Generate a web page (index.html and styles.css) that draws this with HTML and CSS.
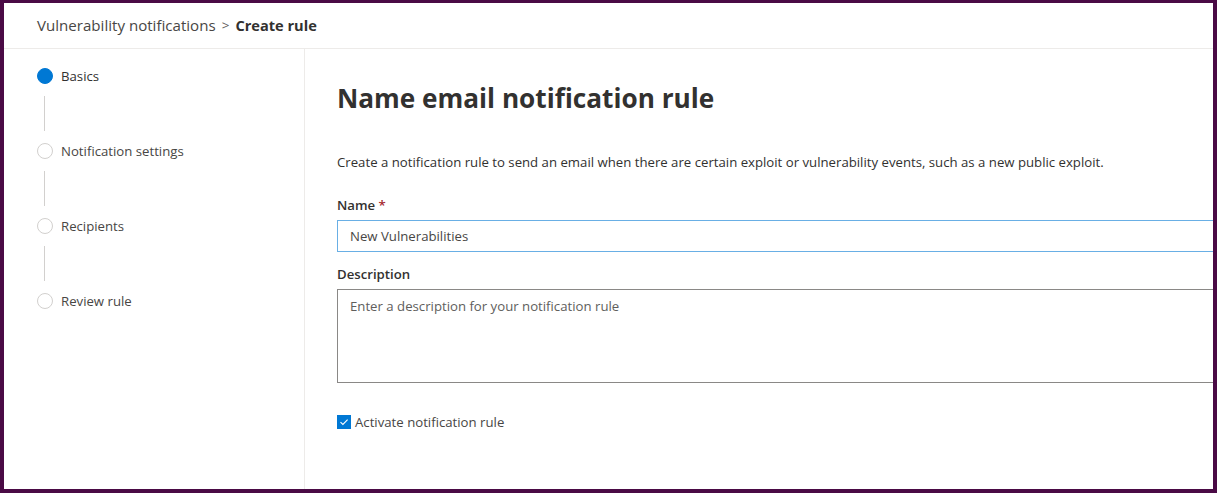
FILE: index.html
```html
<!DOCTYPE html>
<html lang="en">
<head>
<meta charset="utf-8">
<title>Create rule</title>
<link rel="stylesheet" href="styles.css">
</head>
<body>
<div class="frame">
  <header class="header">
    <span class="crumb">Vulnerability notifications</span>
    <span class="sep">&gt;</span>
    <span class="crumb-current">Create rule</span>
  </header>
  <div class="body">
    <nav class="steps">
      <div class="step active"><span class="dot"></span><span class="step-label">Basics</span></div>
      <div class="connector"><span class="line"></span></div>
      <div class="step"><span class="dot"></span><span class="step-label">Notification settings</span></div>
      <div class="connector"><span class="line"></span></div>
      <div class="step"><span class="dot"></span><span class="step-label">Recipients</span></div>
      <div class="connector"><span class="line"></span></div>
      <div class="step"><span class="dot"></span><span class="step-label">Review rule</span></div>
    </nav>
    <main class="main">
      <h1 class="title">Name email notification rule</h1>
      <p class="intro">Create a notification rule to send an email when there are certain exploit or vulnerability events, such as a new public exploit.</p>
      <label class="field-label">Name <span class="req">*</span></label>
      <div class="input focused">New Vulnerabilities</div>
      <label class="field-label">Description</label>
      <div class="textarea placeholder">Enter a description for your notification rule</div>
      <div class="check-row">
        <span class="checkbox">
          <svg width="10" height="10" viewBox="0 0 10 10"><path d="M1.5 5.2 L3.9 7.5 L8.6 2.6" fill="none" stroke="#fff" stroke-width="1.1"/></svg>
        </span>
        <span class="check-label">Activate notification rule</span>
      </div>
    </main>
  </div>
</div>
</body>
</html>
```
FILE: styles.css
```css
* { box-sizing: border-box; }
html, body { margin: 0; padding: 0; }
body {
  font-family: "Open Sans", "Noto Sans", "Liberation Sans", sans-serif;
  color: #323130;
  background: #4a0a45;
}
.frame {
  width: 1217px;
  height: 493px;
  border-style: solid;
  border-color: #4a0a45;
  border-width: 3px 4px 4px 4px;
  background: #fff;
  overflow: hidden;
  display: flex;
  flex-direction: column;
}
.header {
  height: 46px;
  flex: none;
  border-bottom: 1px solid #edebe9;
  padding: 0 0 2px 33px;
  display: flex;
  align-items: center;
  gap: 6px;
  font-size: 15.1px;
  color: #484644;
}
.sep { font-size: 13.5px; color: #605e5c; }
.crumb-current { font-weight: 700; font-size: 14.6px; color: #323130; }
.body {
  flex: 1;
  display: flex;
  min-height: 0;
}
.steps {
  width: 301px;
  flex: none;
  border-right: 1px solid #edebe9;
  padding: 17px 0 0 33px;
  display: flex;
  flex-direction: column;
}
.step {
  display: flex;
  align-items: center;
  gap: 8px;
  height: 20px;
  font-size: 13.2px;
  color: #484644;
}
.dot {
  width: 16px;
  height: 16px;
  border-radius: 50%;
  border: 1px solid #d2d0ce;
  background: #fff;
  flex: none;
}
.step.active .dot { background: #0078d4; border-color: #0078d4; }
.step.active .step-label { color: #323130; }
.connector {
  height: 55px;
  padding: 10px 0;
  display: flex;
}
.line {
  width: 1px;
  margin-left: 7px;
  background: #d2d0ce;
}
.main {
  flex: 1;
  padding: 31px 0 0 32px;
  min-width: 0;
}
.title {
  margin: 0;
  font-size: 26.2px;
  font-weight: 700;
  line-height: 36px;
  color: #323130;
  white-space: nowrap;
}
.intro {
  margin: 37px 0 0;
  font-size: 13.2px;
  line-height: 18px;
  color: #323130;
  white-space: nowrap;
}
.field-label {
  display: block;
  margin-top: 24px;
  font-size: 13.2px;
  font-weight: 600;
  line-height: 20px;
  color: #323130;
}
.req { color: #a4262c; }
.input, .textarea {
  width: 1000px;
  margin-top: 5px;
  border: 1px solid #8a8886;
  padding: 0 12px;
  font-size: 13.2px;
  color: #484644;
}
.input {
  height: 32px;
  line-height: 30px;
}
.input.focused { border-color: #69afe5; }
.field-label + .textarea { margin-top: 5px; }
.input + .field-label { margin-top: 12px; }
.textarea {
  height: 94px;
  padding-top: 6px;
  line-height: 20px;
}
.textarea.placeholder { color: #605e5c; }
.check-row {
  margin-top: 30px;
  display: flex;
  align-items: center;
  gap: 4px;
}
.checkbox {
  width: 14px;
  height: 14px;
  background: #0078d4;
  display: flex;
  align-items: center;
  justify-content: center;
  flex: none;
}
.check-label {
  font-size: 13.2px;
  color: #484644;
  line-height: 18px;
}
```
